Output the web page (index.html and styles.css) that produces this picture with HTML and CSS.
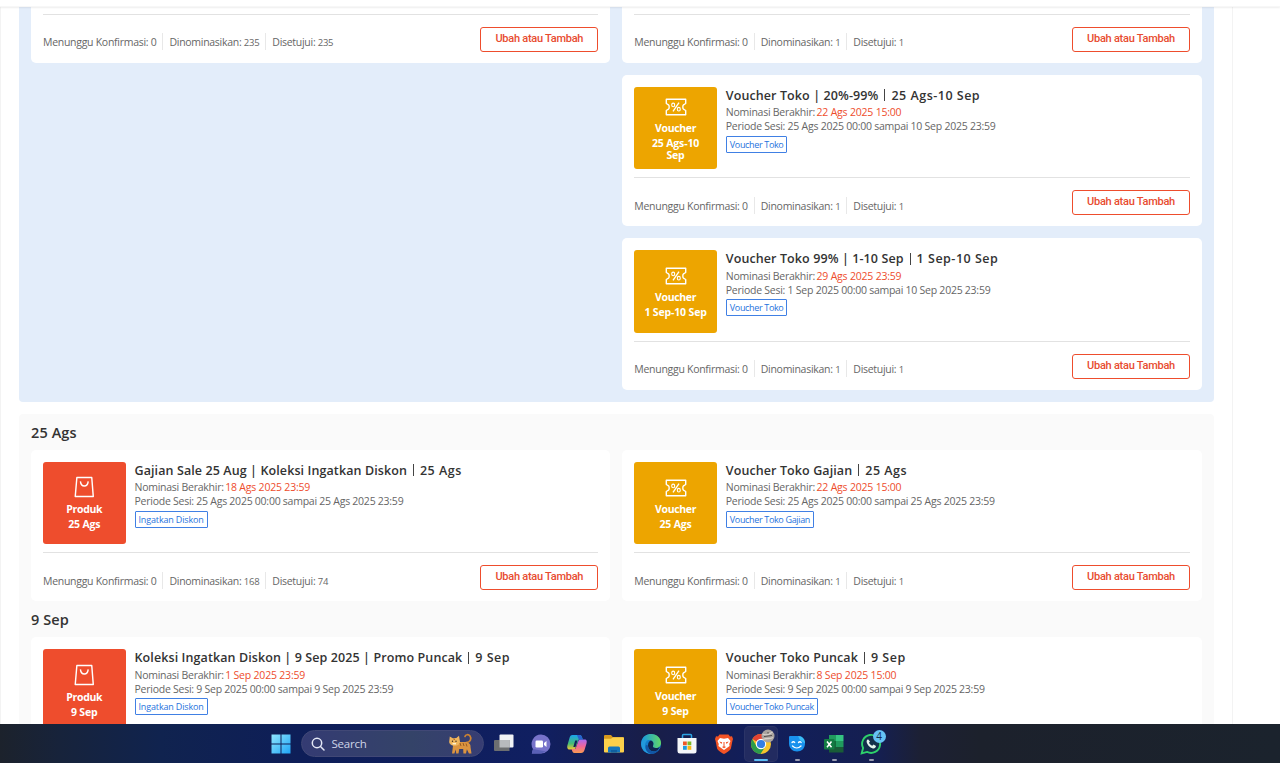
FILE: index.html
```html
<!DOCTYPE html>
<html lang="id">
<head>
<meta charset="utf-8">
<title>Nominasi Promosi</title>
<link rel="stylesheet" href="styles.css">
</head>
<body>
<svg class="defs" aria-hidden="true">
  <symbol id="voucher" viewBox="0 0 22 18" fill="none" stroke="#fff" stroke-width="1.4">
    <path d="M1.300 1.200h19.400v4.300l-2.200 1.300c-.9.600-.9 3.800 0 4.400l2.200 1.300v4.300H1.300v-4.300l2.200-1.300c.9-.6.9-3.800 0-4.400L1.300 5.500z" stroke-linejoin="round"/>
    <path d="M14 4.600L8 13.400" stroke-width="1.300"/>
    <ellipse cx="8.200" cy="6.900" rx="1.500" ry="1.800" stroke-width="1.100"/>
    <ellipse cx="13.800" cy="11.200" rx="1.500" ry="1.800" stroke-width="1.100"/>
  </symbol>
  <symbol id="bag" viewBox="0 0 22 22" fill="none" stroke="#fff" stroke-width="1.500">
    <path d="M3 1h15.600l1.600 20H1.300z" stroke-linejoin="round"/>
    <path d="M6.700 5.200c.4 3.200 1.900 4.800 4.100 4.800s3.700-1.600 4.100-4.800"/>
  </symbol>
</svg>
<div class="screen">
  <header class="topbar"></header>
  <main class="page">
    <div class="content">
      <section class="group group-active">
        <div class="cards">
          <article class="card">
            <div class="card-body"></div>
            <div class="card-foot"><div class="stats"><span>Menunggu Konfirmasi: 0</span><span>Dinominasikan: <b>235</b></span><span>Disetujui: <b>235</b></span></div><button class="action">Ubah atau Tambah</button></div>
          </article>
          <article class="card">
            <div class="card-body"></div>
            <div class="card-foot"><div class="stats"><span>Menunggu Konfirmasi: 0</span><span>Dinominasikan: <b>1</b></span><span>Disetujui: <b>1</b></span></div><button class="action">Ubah atau Tambah</button></div>
          </article>
          <article class="card second">
            <div class="card-body">
              <div class="thumb"><svg class="ic-voucher"><use href="#voucher"/></svg><strong>Voucher</strong><em>25 Ags-10<br>Sep</em></div>
              <div class="info"><h3>Voucher Toko | 20%-99%<i></i><span>25 Ags-10 Sep</span></h3><p>Nominasi Berakhir: <mark>22 Ags 2025 15:00</mark></p><p class="period">Periode Sesi: 25 Ags 2025 00:00 sampai 10 Sep 2025 23:59</p><span class="tag">Voucher Toko</span></div>
            </div>
            <div class="card-foot"><div class="stats"><span>Menunggu Konfirmasi: 0</span><span>Dinominasikan: <b>1</b></span><span>Disetujui: <b>1</b></span></div><button class="action">Ubah atau Tambah</button></div>
          </article>
          <article class="card second">
            <div class="card-body">
              <div class="thumb"><svg class="ic-voucher"><use href="#voucher"/></svg><strong>Voucher</strong><em>1 Sep-10 Sep</em></div>
              <div class="info"><h3>Voucher Toko 99% | 1-10 Sep<i></i><span>1 Sep-10 Sep</span></h3><p>Nominasi Berakhir: <mark>29 Ags 2025 23:59</mark></p><p class="period">Periode Sesi: 1 Sep 2025 00:00 sampai 10 Sep 2025 23:59</p><span class="tag">Voucher Toko</span></div>
            </div>
            <div class="card-foot"><div class="stats"><span>Menunggu Konfirmasi: 0</span><span>Dinominasikan: <b>1</b></span><span>Disetujui: <b>1</b></span></div><button class="action">Ubah atau Tambah</button></div>
          </article>
        </div>
      </section>
      <section class="group">
        <h2>25 Ags</h2>
        <div class="cards">
          <article class="card">
            <div class="card-body">
              <div class="thumb product"><svg class="ic-bag"><use href="#bag"/></svg><strong>Produk</strong><em>25 Ags</em></div>
              <div class="info"><h3>Gajian Sale 25 Aug | Koleksi Ingatkan Diskon<i></i><span>25 Ags</span></h3><p>Nominasi Berakhir: <mark>18 Ags 2025 23:59</mark></p><p class="period">Periode Sesi: 25 Ags 2025 00:00 sampai 25 Ags 2025 23:59</p><span class="tag tag-remind">Ingatkan Diskon</span></div>
            </div>
            <div class="card-foot"><div class="stats"><span>Menunggu Konfirmasi: 0</span><span>Dinominasikan: <b>168</b></span><span>Disetujui: <b>74</b></span></div><button class="action">Ubah atau Tambah</button></div>
          </article>
          <article class="card">
            <div class="card-body">
              <div class="thumb"><svg class="ic-voucher"><use href="#voucher"/></svg><strong>Voucher</strong><em>25 Ags</em></div>
              <div class="info"><h3>Voucher Toko Gajian<i></i><span>25 Ags</span></h3><p>Nominasi Berakhir: <mark>22 Ags 2025 15:00</mark></p><p class="period">Periode Sesi: 25 Ags 2025 00:00 sampai 25 Ags 2025 23:59</p><span class="tag">Voucher Toko Gajian</span></div>
            </div>
            <div class="card-foot"><div class="stats"><span>Menunggu Konfirmasi: 0</span><span>Dinominasikan: <b>1</b></span><span>Disetujui: <b>1</b></span></div><button class="action">Ubah atau Tambah</button></div>
          </article>
        </div>
        <h2>9 Sep</h2>
        <div class="cards">
          <article class="card">
            <div class="card-body">
              <div class="thumb product"><svg class="ic-bag"><use href="#bag"/></svg><strong>Produk</strong><em>9 Sep</em></div>
              <div class="info"><h3>Koleksi Ingatkan Diskon | 9 Sep 2025 | Promo Puncak<i></i><span>9 Sep</span></h3><p>Nominasi Berakhir: <mark>1 Sep 2025 23:59</mark></p><p class="period">Periode Sesi: 9 Sep 2025 00:00 sampai 9 Sep 2025 23:59</p><span class="tag tag-remind">Ingatkan Diskon</span></div>
            </div>
          </article>
          <article class="card">
            <div class="card-body">
              <div class="thumb"><svg class="ic-voucher"><use href="#voucher"/></svg><strong>Voucher</strong><em>9 Sep</em></div>
              <div class="info"><h3>Voucher Toko Puncak<i></i><span>9 Sep</span></h3><p>Nominasi Berakhir: <mark>8 Sep 2025 15:00</mark></p><p class="period">Periode Sesi: 9 Sep 2025 00:00 sampai 9 Sep 2025 23:59</p><span class="tag">Voucher Toko Puncak</span></div>
            </div>
          </article>
        </div>
      </section>
    </div>
  </main>
  <footer class="taskbar">
    <div class="start"><svg width="20" height="20" viewBox="0 0 20 20"><defs><linearGradient id="win" x1="0" y1="0" x2="1" y2="1"><stop offset="0" stop-color="#8fe6ff"/><stop offset="1" stop-color="#1fa5f5"/></linearGradient></defs><path fill="url(#win)" d="M.5.5h9v9h-9zM10.500.5h9v9h-9zM.5 10.500h9v9h-9zM10.500 10.500h9v9h-9z"/></svg></div>
    <div class="search">
      <svg width="14" height="14" viewBox="0 0 14 14" fill="none" stroke="#e4e8f6" stroke-width="1.500" stroke-linecap="round"><circle cx="6" cy="6" r="4.700"/><path d="M9.500 9.500l3.500 3.500"/></svg>
      <span>Search</span>
      <svg class="cat" width="26" height="22" viewBox="0 0 26 22"><path d="M18 9.500c5 0 5.500-4.500 4-6.500-1.500-2-4.500-1.500-5 .5" fill="none" stroke="#cf8430" stroke-width="1.700" stroke-linecap="round"/><path d="M5.500 9h11c4 0 6.500 2 6 5l1 6.500h-2.600l-2-4.300-.9 4.300h-2.600l-.2-4.500h-4l-.7 4.500H8.200l-.4-4-1.400 4H4z" fill="#dc9440"/><path d="M1.800 3.500l3 1.700 3.500-.2L11 2.700l1 5.800c0 3-2.600 4.200-5.200 4.200-3 0-5.600-1.500-5.600-4z" fill="#f0b65d"/><path d="M12 10l1 3M15 10l1 3M18 10.500l1 3M6 5.500l.3 1.500" stroke="#9a5b20"/><circle cx="4.500" cy="8.300" r=".7" fill="#3c2a20"/><circle cx="8" cy="8.300" r=".7" fill="#3c2a20"/><path d="M4.500 10.700h3.500" stroke="#fff0cc" stroke-width="1.500"/></svg>
    </div>
    <div class="app"><svg viewBox="0 0 22 22"><rect x="6.500" y="1.500" width="14" height="13" rx="1" fill="#f1f3f6"/><path d="M2 7h14.500v11H2a1 1 0 0 1-1-1V8a1 1 0 0 1 1-1z" fill="#6c6e70"/><path d="M6.500 7h10v7.500h-10z" fill="#b8babd"/></svg></div>
    <div class="app"><svg viewBox="0 0 22 22"><path d="M11 1.500a9.500 9.500 0 1 1 0 19H1.800L3 16A9.500 9.500 0 0 1 11 1.500z" fill="#7773ca"/><path d="M3 16L1.800 20.500H11l5-2z" fill="#5960b6"/><rect x="5.500" y="7.500" width="7.500" height="7" rx="1.200" fill="#fff"/><path d="M14 10l2.500-2v6L14 12z" fill="#fff"/></svg></div>
    <div class="app"><svg viewBox="0 0 22 22"><defs><linearGradient id="ca" x1="0" y1="0" x2="0" y2="1"><stop stop-color="#19a6ee"/><stop offset=".6" stop-color="#48bd73"/><stop offset="1" stop-color="#f5c834"/></linearGradient><linearGradient id="cb" x1="0" y1="0" x2="0" y2="1"><stop stop-color="#a86af2"/><stop offset=".5" stop-color="#f0659a"/><stop offset="1" stop-color="#f99b51"/></linearGradient></defs><path d="M6.500 2h7c2 0 2.300 1.500 2.800 3l.5 1.500h-4L9.500 15c-.5 1-1.200 1.500-2.500 1.500H3.500C1 16.500 1 14 1.500 12l2-7c.6-2 1.200-3 3-3z" fill="url(#ca)"/><path d="M15 6.500h3.500c2.500 0 2.500 2 2 4l-2 6.500c-.6 2-1.600 3-3.500 3H8.500c-1.800 0-2.200-1.500-2.600-3L5.700 16H8c1 0 1.700-.5 2-1.500l2.300-6.200c.4-1.300 1.200-1.800 2.700-1.800z" fill="url(#cb)"/><path d="M11 2h2.500c2 0 2.300 1.500 2.800 3l.5 1.500h-4z" fill="#2862cf"/><path d="M9.200 7.500h2.300l-2 6.500H7.300z" fill="#10225a"/></svg></div>
    <div class="app"><svg viewBox="0 0 22 22"><path d="M1 3a1 1 0 0 1 1-1h6l2 2.200h10a1 1 0 0 1 1 1V8H1z" fill="#d6981d"/><path d="M1 5.800h7L10 4.300h10a1 1 0 0 1 1 1V18.500a1 1 0 0 1-1 1H2a1 1 0 0 1-1-1z" fill="#fbd04b"/><path d="M5 19.500V15a1.500 1.500 0 0 1 1.500-1.500h9A1.500 1.500 0 0 1 17 15v4.500z" fill="#1476bd"/><path d="M8 19.500V17h6v2.500z" fill="#1060a0"/></svg></div>
    <div class="app"><svg viewBox="0 0 22 22"><defs><linearGradient id="ed"><stop stop-color="#1597e3"/><stop offset="1" stop-color="#62d865"/></linearGradient></defs><circle cx="11" cy="11" r="10" fill="#147fcc"/><path d="M1.200 9C2.500 3 7 1 11 1c6 0 10 4.300 10 9 0 3-2.500 5-5 5s-4-1-2.800-2.800C14 9 12 7 8.500 7 5 7 2.500 8 1.200 9z" fill="url(#ed)"/><path d="M13.200 12.200c-.8 1.300 0 2.800 2.800 2.800 1.500 0 3-.5 4-1.500-1 3-3.500 5-6 5-4 0-6-3-6-6s1.500-4.500 3-5c2 .7 3 2.500 2.200 4.700z" fill="#10254f"/><path d="M1.200 9C2.500 7.500 5.500 6.500 8 7 5 9 4 13 6 16.500S11.500 21 11.500 21C5 21 .5 16 1.200 9z" fill="#2299dc"/><path d="M8 12.500c0 3.500 3 6.500 7 6l4-2c-2 3-5 4.500-7.500 4.500C7 20 4.500 16 6 12z" fill="#1256a5"/></svg></div>
    <div class="app"><svg viewBox="0 0 22 22"><path d="M6.500 6V2.500a1 1 0 0 1 1-1h7a1 1 0 0 1 1 1V6" fill="none" stroke="#2da4e4" stroke-width="1.500"/><path d="M1.500 5h19v13a2.500 2.500 0 0 1-2.500 2.500H4A2.500 2.500 0 0 1 1.500 18z" fill="#f5f7fa"/><path d="M7 8.500h3.800v3.800H7z" fill="#ef5728"/><path d="M11.500 8.500h3.800v3.800h-3.800z" fill="#7cb928"/><path d="M7 13h3.800v3.800H7z" fill="#1f9be1"/><path d="M11.500 13h3.800v3.800h-3.800z" fill="#fab817"/></svg></div>
    <div class="app"><svg viewBox="0 0 22 22"><path d="M6.500 1.500h9l1.500 2 2-.2L20 6l-.6 2-1.500 7.500c-.3 1.500-3.900 4-6.900 5.500-3-1.500-6.600-4-6.900-5.500L2.600 8 2 6l1-2.700 2 .2z" fill="#f35325"/><path d="M7 5l4 .8L15 5l2.500 3-1.300 3 .4 2-3.800 2.700L11 17l-1.800-1.300L5.400 13l.4-2-1.300-3z" fill="#fff"/><path d="M6.200 8.500l3 .8-.8 1.700zm9.600 0l-3 .8.8 1.700zM9 14l2-1 2 1-2 1.300z" fill="#f35325"/><path d="M11 9v4" stroke="#f35325"/></svg></div>
    <div class="app focused"><svg viewBox="0 0 22 22"><circle cx="11" cy="11" r="10" fill="#f7c52c"/><path d="M11 11L2.300 6A10 10 0 0 1 19.700 6H11z" fill="#e34332"/><path d="M2.300 6A10 10 0 0 0 10.500 21l4.800-7.500-8.600 0z" fill="#2c9c4b"/><circle cx="11" cy="11" r="5.200" fill="#fff"/><circle cx="11" cy="11" r="4.100" fill="#337fe4"/></svg><svg class="avatar" viewBox="0 0 14 14"><circle cx="7" cy="7" r="6.500" fill="#aaa49f"/><path d="M1.500 5c4 2 7 .5 10-2M2 10.500c4-2 7 0 10-2" stroke="#d6d0ca" stroke-width="1.300" fill="none"/><path d="M3 7.500l8-1M7 3v1.500" stroke="#514c4b"/></svg><i class="run active"></i></div>
    <div class="app"><svg viewBox="0 0 22 22"><path d="M4 3h7.500c5 0 7.500 3.500 7.500 7.500 0 5-3.500 8-8 8s-8-3.500-8-8V4a1 1 0 0 1 1-1z" fill="#1991ed"/><path d="M12 3c4.500 0 7 3.500 7 7.500L14 7z" fill="#3bbcf6"/><path d="M6 9.500c.8-1 2-1 2.700 0M12.500 9.500c.8-1 2-1 2.700 0M6.500 13c2.500 2.500 6 2.500 8.500 0" stroke="#fff" stroke-width="1.300" fill="none" stroke-linecap="round"/></svg><i class="run"></i></div>
    <div class="app"><svg viewBox="0 0 22 22"><path d="M6 2h7v6H6z" fill="#209b5e"/><path d="M13 2h7.500v6H13z" fill="#35c481"/><path d="M6 8h7v6H6z" fill="#126b3b"/><path d="M13 8h7.500v6H13z" fill="#209b5e"/><path d="M6 14h14.500v5.500H6z" fill="#185c37"/><rect x="1" y="6" width="10.500" height="10.500" rx="1" fill="#127b43"/><path d="M4 8.500l4.500 5.700M8.500 8.500L4 14.200" stroke="#fff" stroke-width="1.500"/></svg><i class="run"></i></div>
    <div class="app"><svg viewBox="0 0 22 22"><path d="M1.700 20.300l1.400-5.300A9 9 0 1 1 7 18.900z" fill="#122f4b" stroke="#2ed16b" stroke-width="1.900"/><path d="M8 6.200c-3 1.500-.5 5.800 2 7.700s5.500 2.500 6-.9l-2.500-1.400-1.200 1.200c-1.600-.6-2.600-1.700-3.300-3.100l1-1.100z" fill="#e6f4ed"/></svg><span class="badge">4</span><i class="run"></i></div>
  </footer>
</div>
</body>
</html>
```

FILE: styles.css
```css
* { box-sizing: border-box; }
body { margin: 0; background: #fff; font-family: "Open Sans", "Noto Sans", sans-serif; }
.defs { display: none; }
.screen { display: flex; flex-direction: column; width: 1280px; height: 763px; overflow: hidden; background: #fff; }
.topbar { flex: 0 0 7px; background: #fff; border-bottom: 1px solid #f7f7f7; box-shadow: 0 1px 2px rgba(0,0,0,.07); z-index: 1; }
.page { flex: 1; min-height: 0; width: 1233px; padding: 0 18px; border: solid #f3f3f3; border-width: 0 1px; overflow: hidden; }
.content { margin-top: -107.500px; width: 1195px; }
.group { padding: 0 12px 12px; background: #fafafa; border-radius: 4px; }
.group-active { padding-top: 12px; margin-bottom: 12px; background: #e3edfa; }
.cards { display: grid; grid-template-columns: 579.300px 579.700px; gap: 12px; }
.second { grid-column: 2; }
.card { height: 151.400px; padding: 12px; background: #fff; border-radius: 5px; }
.card-body { display: flex; gap: 9px; height: 91.500px; border-bottom: 1px solid #e2e2e2; }
.thumb { flex: 0 0 82.500px; height: 82.500px; border-radius: 3px; background: #eda500; color: #fff; display: flex; flex-direction: column; align-items: center; justify-content: center; text-align: center; padding-top: 3px; }
.product { background: #ee4d2d; padding-top: 1px; }
.thumb strong { font-size: 10.500px; font-weight: 700; line-height: 14px; letter-spacing: -.35px; margin-top: 5px; }
.thumb em { font-size: 10.500px; font-style: normal; font-weight: 700; line-height: 12.500px; letter-spacing: -.15px; margin-top: 2px; }
.ic-voucher { width: 22px; height: 18px; }
.ic-bag { width: 21px; height: 22px; }
.product strong { margin-top: 4px; }
h2, h3, p { margin: 0; }
h2 { height: 36.200px; line-height: 37px; font-size: 14.500px; font-weight: 600; color: #333; letter-spacing: .1px; }
h3 { font-size: 12.500px; line-height: 17px; font-weight: 600; color: #333; white-space: nowrap; display: flex; align-items: center; letter-spacing: .1px; }
h3 i { width: 1px; height: 12px; background: #444; margin: 0 6px; }
h3 span { letter-spacing: .5px; }
.info { white-space: nowrap; }
.info p { font-size: 10.500px; line-height: 14px; color: #666; letter-spacing: -.25px; margin-top: 1.500px; }
.info .period { margin-top: 0; }
.info mark { background: none; color: #ee4d2d; margin-left: -1px; letter-spacing: -.2px; }
.tag { display: block; width: max-content; height: 17px; padding: 0 3px; margin-top: 2.500px; border: 1px solid #4080e4; border-radius: 1px; color: #2673dd; font-size: 9px; line-height: 15px; letter-spacing: -.34px; }
.tag-remind { letter-spacing: -.15px; }
.card-foot { display: flex; justify-content: space-between; padding-top: 11.800px; }
.stats { display: flex; height: 17px; margin-top: 6.500px; font-size: 10.500px; line-height: 19px; color: #666; letter-spacing: -.28px; white-space: nowrap; }
.stats span + span { margin-left: 6px; padding-left: 6px; border-left: 1px solid #e8e8e8; }
.stats b { font-size: 9.500px; font-weight: 500; }
.action { width: 118px; height: 25px; padding: 0 0 2px; border: 1px solid #ee4d2d; border-radius: 3px; background: #fff; color: #e84c30; font: 500 11px Roboto, sans-serif; letter-spacing: -.26px; }
.taskbar { flex: 0 0 39px; display: flex; align-items: center; padding-left: 269.500px; background: linear-gradient(90deg, #1c222c 0, #17233b 60px, #10234f 160px, #0e1e58 300px, #101f61 540px, #191e48 650px, #111e5c 760px, #151f50 880px, #1c2034 920px, #1c212c 980px, #1b232d 1280px); }
.start { width: 31px; display: flex; }
.start svg { margin-left: 1px; }
.search { width: 183px; height: 27px; border-radius: 14px; background: linear-gradient(90deg, #343b73, #344368 60%, #373d73); border: 1px solid #414876; display: flex; align-items: center; padding: 0 9px; color: #cdd4e8; font-size: 11.500px; letter-spacing: -.2px; }
.search span { margin-left: 7px; }
.cat { margin-left: auto; }
.app { position: relative; width: 32px; height: 34px; margin-left: 4.650px; display: flex; align-items: center; justify-content: center; }
.app > svg { width: 22px; height: 22px; }
.focused { background: #222b60; border-radius: 4px; box-shadow: 0 0 0 1px #2b3467; }
.app .avatar { position: absolute; width: 14px; height: 14px; right: 2px; top: 2px; }
.run { position: absolute; bottom: 0; left: 14px; width: 5px; height: 2px; border-radius: 1px; background: #989bb0; }
.run.active { left: 9px; width: 14px; background: #5bbdf5; }
.badge { position: absolute; right: 1px; top: 3px; width: 13px; height: 13px; border-radius: 50%; background: #66c3f5; color: #15304c; font-size: 10px; line-height: 13px; text-align: center; }
```
